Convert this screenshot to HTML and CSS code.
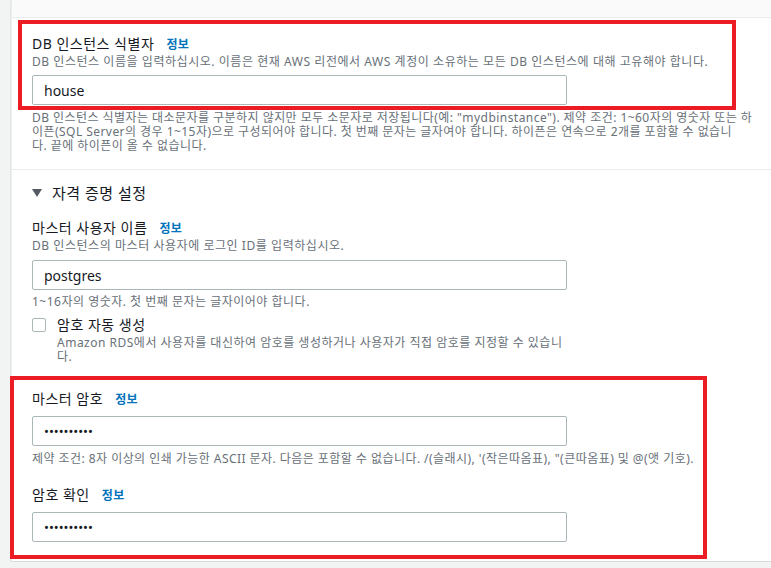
FILE: index.html
```html
<!DOCTYPE html>
<html lang="ko">
<head>
<meta charset="UTF-8">
<meta name="viewport" content="width=device-width, initial-scale=1.0">
<title>DB 인스턴스 설정</title>
<link rel="stylesheet" href="styles.css">
</head>
<body>
<div class="card">
  <div class="card-top"></div>

  <div class="section">
    <div class="highlight highlight-first">
      <div class="label">DB 인스턴스 식별자 <a class="info" href="#">정보</a></div>
      <p class="desc">DB 인스턴스 이름을 입력하십시오. 이름은 현재 AWS 리전에서 AWS 계정이 소유하는 모든 DB 인스턴스에 대해 고유해야 합니다.</p>
      <input class="field" type="text" value="house">
    </div>
    <p class="hint hint-wide">DB 인스턴스 식별자는 대소문자를 구분하지 않지만 모두 소문자로 저장됩니다(예: "mydbinstance"). 제약 조건: 1~60자의 영숫자 또는 하<br>이픈(SQL Server의 경우 1~15자)으로 구성되어야 합니다. 첫 번째 문자는 글자여야 합니다. 하이픈은 연속으로 2개를 포함할 수 없습니<br>다. 끝에 하이픈이 올 수 없습니다.</p>
  </div>

  <div class="section section-last">
    <div class="expander">
      <svg class="caret" width="10" height="8" viewBox="0 0 10 8"><path d="M0 0 H10 L5 8 Z" fill="#545b64"/></svg>
      <span>자격 증명 설정</span>
    </div>

    <div class="group">
      <div class="label">마스터 사용자 이름 <a class="info" href="#">정보</a></div>
      <p class="desc">DB 인스턴스의 마스터 사용자에 로그인 ID를 입력하십시오.</p>
      <input class="field" type="text" value="postgres">
      <p class="hint">1~16자의 영숫자. 첫 번째 문자는 글자이어야 합니다.</p>
    </div>

    <label class="checkbox-row">
      <span class="checkbox"></span>
      <span class="checkbox-text">
        <span class="checkbox-label">암호 자동 생성</span>
        <span class="hint checkbox-hint">Amazon RDS에서 사용자를 대신하여 암호를 생성하거나 사용자가 직접 암호를 지정할 수 있습니<br>다.</span>
      </span>
    </label>

    <div class="highlight highlight-second">
      <div class="label">마스터 암호 <a class="info" href="#">정보</a></div>
      <input class="field field-password" type="password" value="1234567890">
      <p class="hint hint-pass">제약 조건: 8자 이상의 인쇄 가능한 ASCII 문자. 다음은 포함할 수 없습니다. /(슬래시), '(작은따옴표), "(큰따옴표) 및 @(앳 기호).</p>

      <div class="label label-confirm">암호 확인 <a class="info" href="#">정보</a></div>
      <input class="field field-password" type="password" value="1234567890">
    </div>
  </div>
</div>
</body>
</html>
```

FILE: styles.css
```css
body {
  margin: 0;
  background-color: #f2f3f3;
  font-family: "Noto Sans", "Noto Sans CJK KR", sans-serif;
  color: #16191f;
}

.card {
  margin-left: 11px;
  background-color: #fff;
  border-left: 1px solid #eaeded;
  border-bottom: 1px solid #d5dbdb;
  box-shadow: 0 1px 1px rgba(0, 28, 36, 0.3);
  height: 562px;
  box-sizing: border-box;
}

.card-top {
  height: 17px;
  background-color: #fafafa;
  border-bottom: 1px solid #eaeded;
}

.section {
  padding-left: 20px;
}

.card-top + .section {
  border-bottom: 1px solid #eaeded;
  padding-bottom: 16px;
}

/* caja roja de anotación */
.highlight {
  border: 4px solid #ec1c24;
  box-sizing: border-box;
}

.highlight-first {
  margin: 2px 0 0 -14px;
  padding: 10px 0 1px 10px;
  width: 718px;
}

.highlight-second {
  margin: 12px 0 0 -22px;
  padding: 9px 0 13px 18px;
  width: 697px;
}

.label {
  font-size: 14px;
  line-height: 20px;
  height: 20px;
  letter-spacing: 0.5px;
}

.label-confirm {
  margin-top: 19px;
}

.info {
  color: #0073bb;
  font-size: 12px;
  font-weight: bold;
  text-decoration: none;
  letter-spacing: 0.3px;
  margin-left: 8px;
}

.desc {
  margin: 0;
  font-size: 12px;
  line-height: 16px;
  letter-spacing: 0.55px;
  color: #687078;
}

.field {
  display: block;
  box-sizing: border-box;
  width: 535px;
  height: 30px;
  margin-top: 6px;
  padding: 0 11px;
  border: 1px solid #aab7b8;
  border-radius: 2px;
  font-family: "Noto Sans", "Noto Sans CJK KR", sans-serif;
  font-size: 14px;
  color: #16191f;
  outline: none;
}

.highlight-first .field {
  margin-top: 5px;
}

.highlight-second .field {
  margin-top: 7px;
}

.field-password {
  font-size: 13px;
  letter-spacing: 0;
}

.hint {
  margin: 5px 0 0;
  font-size: 12px;
  line-height: 14px;
  letter-spacing: 0.5px;
  color: #687078;
}

.hint-wide {
  margin-top: 1px;
  letter-spacing: 0.45px;
}

.hint-pass {
  margin-top: 6px;
  letter-spacing: 0.45px;
}

.expander {
  display: flex;
  align-items: center;
  gap: 10px;
  margin-top: 12px;
  font-size: 15px;
  line-height: 22px;
  letter-spacing: 0.5px;
  color: #16191f;
}

.group {
  margin-top: 14px;
}

.checkbox-row {
  display: flex;
  gap: 11px;
  margin-top: 6px;
}

.checkbox {
  flex: none;
  width: 14px;
  height: 14px;
  margin-top: 3px;
  border: 1px solid #aab7b8;
  border-radius: 2px;
  box-sizing: border-box;
}

.checkbox-text {
  display: flex;
  flex-direction: column;
}

.checkbox-label {
  font-size: 14px;
  line-height: 20px;
  letter-spacing: 0.5px;
}

.checkbox-hint {
  margin-top: 1px;
}
```
